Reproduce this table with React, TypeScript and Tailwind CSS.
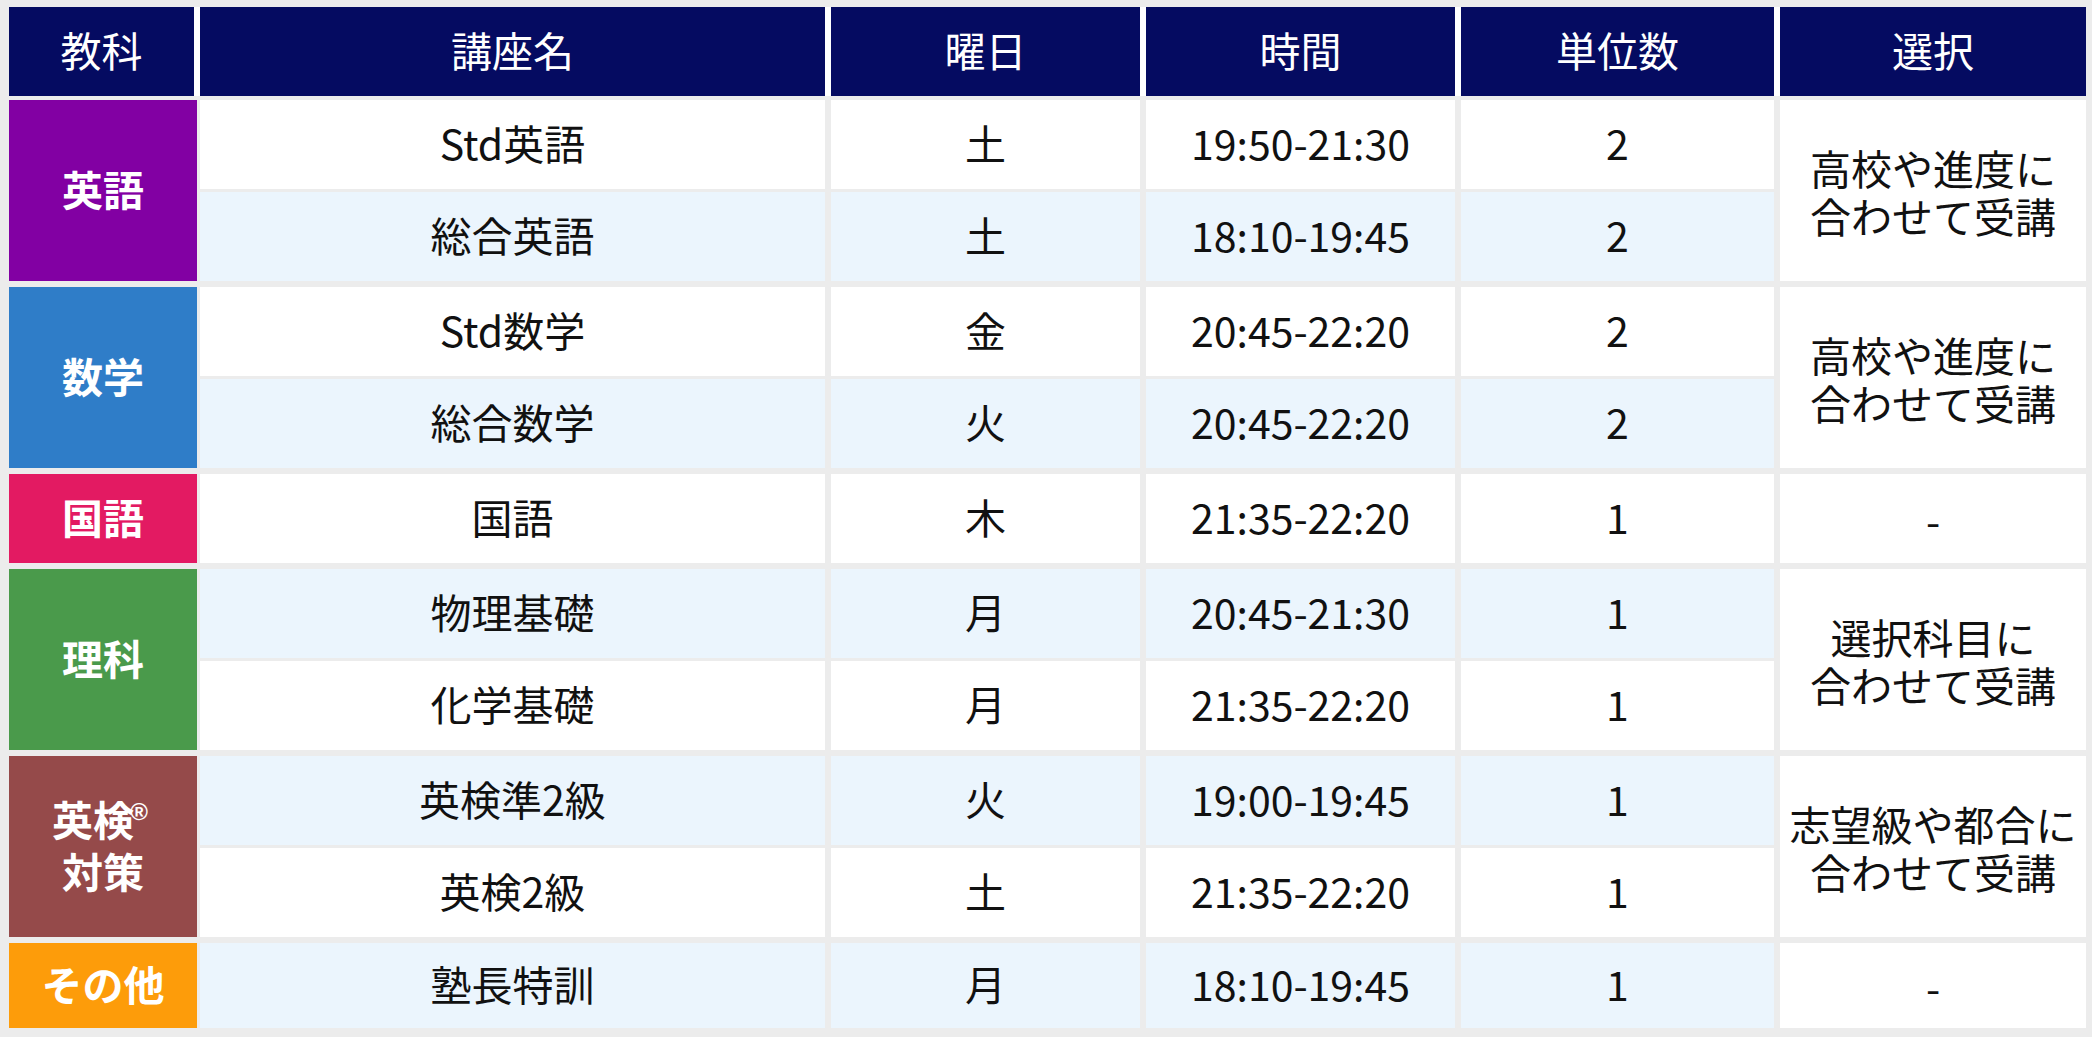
import React from "react";

type Row = { name: string; day: string; time: string; units: string };
type Group = { label: React.ReactNode; color: string; rows: Row[]; select: React.ReactNode };

const groups: Group[] = [
  {
    label: "英語",
    color: "bg-[#8200a3]",
    rows: [
      { name: "Std英語", day: "土", time: "19:50-21:30", units: "2" },
      { name: "総合英語", day: "土", time: "18:10-19:45", units: "2" },
    ],
    select: (
      <>
        高校や進度に
        <br />
        合わせて受講
      </>
    ),
  },
  {
    label: "数学",
    color: "bg-[#2f7dc8]",
    rows: [
      { name: "Std数学", day: "金", time: "20:45-22:20", units: "2" },
      { name: "総合数学", day: "火", time: "20:45-22:20", units: "2" },
    ],
    select: (
      <>
        高校や進度に
        <br />
        合わせて受講
      </>
    ),
  },
  {
    label: "国語",
    color: "bg-[#e31a62]",
    rows: [{ name: "国語", day: "木", time: "21:35-22:20", units: "1" }],
    select: "-",
  },
  {
    label: "理科",
    color: "bg-[#4a9a4b]",
    rows: [
      { name: "物理基礎", day: "月", time: "20:45-21:30", units: "1" },
      { name: "化学基礎", day: "月", time: "21:35-22:20", units: "1" },
    ],
    select: (
      <>
        選択科目に
        <br />
        合わせて受講
      </>
    ),
  },
  {
    label: (
      <div className="leading-[52px]">
        <span className="relative inline-block pr-[20px]">
          英検
          <span className="absolute right-[6px] top-[8px] text-[24px] leading-none font-bold font-['Liberation_Sans']">
            ®
          </span>
        </span>
        <br />
        対策
      </div>
    ),
    color: "bg-[#954a4a]",
    rows: [
      { name: "英検準2級", day: "火", time: "19:00-19:45", units: "1" },
      { name: "英検2級", day: "土", time: "21:35-22:20", units: "1" },
    ],
    select: (
      <>
        志望級や都合に
        <br />
        合わせて受講
      </>
    ),
  },
  {
    label: "その他",
    color: "bg-[#fd9c0a]",
    rows: [{ name: "塾長特訓", day: "月", time: "18:10-19:45", units: "1" }],
    select: "-",
  },
];

const font = { fontFamily: '"Noto Sans CJK JP", "Noto Sans", sans-serif' };

export default function App() {
  let idx = 0;
  return (
    <div
      className="w-[2092px] h-[1037px] bg-[#ececec] pl-[9px] pt-[7px] text-[41px] leading-[48px] text-[#111111]"
      style={font}
    >
      {/* header */}
      <div className="flex h-[89px] gap-[6px] bg-white w-[2077px]">
        {[
          ["教科", "w-[185px]"],
          ["講座名", "w-[625px]"],
          ["曜日", "w-[309px]"],
          ["時間", "w-[309px]"],
          ["単位数", "w-[313px]"],
          ["選択", "w-[306px]"],
        ].map(([t, w]) => (
          <div
            key={t}
            className={`${w} h-full bg-[#050b61] text-white flex items-center justify-center pb-[5px]`}
          >
            {t}
          </div>
        ))}
      </div>

      {/* body */}
      <div className="mt-[4px] flex flex-col gap-[6px]">
        {groups.map((g, gi) => (
          <div key={gi} className="flex">
            <div
              className={`w-[188px] ${g.color} text-white font-bold flex items-center justify-center text-center pb-[5px]`}
            >
              <div>{g.label}</div>
            </div>
            <div className="ml-[3px] flex flex-col gap-[3px]">
              {g.rows.map((r) => {
                const bg = idx++ % 2 === 0 ? "bg-white" : "bg-[#ebf5fd]";
                const h = gi === groups.length - 1 ? "h-[85px]" : "h-[89px]";
                return (
                  <div key={r.name} className={`flex gap-[6px] ${h}`}>
                    <div className={`w-[625px] ${bg} flex items-center justify-center pb-[5px]`}>{r.name}</div>
                    <div className={`w-[309px] ${bg} flex items-center justify-center pb-[5px]`}>{r.day}</div>
                    <div className={`w-[309px] ${bg} flex items-center justify-center pb-[5px]`}>{r.time}</div>
                    <div className={`w-[313px] ${bg} flex items-center justify-center pb-[5px]`}>{r.units}</div>
                  </div>
                );
              })}
            </div>
            <div className="ml-[6px] w-[306px] bg-white flex items-center justify-center text-center">
              <div>{g.select}</div>
            </div>
          </div>
        ))}
      </div>
    </div>
  );
}
